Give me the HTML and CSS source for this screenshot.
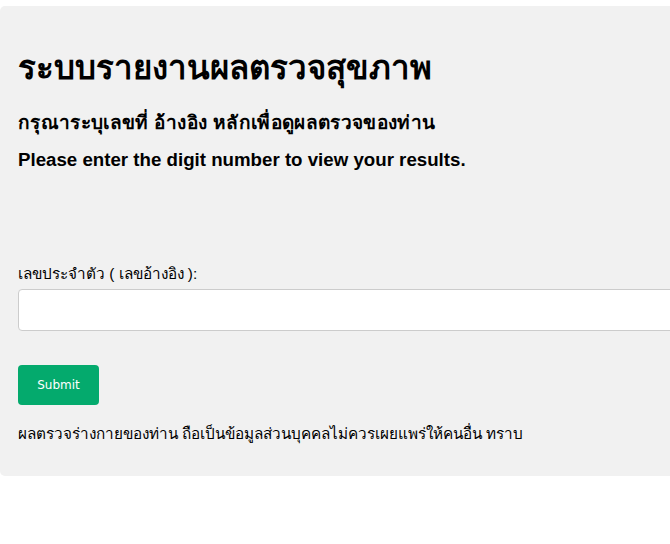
FILE: index.html
```html
<!DOCTYPE html>
<html lang="th">
<head>
<meta charset="utf-8">
<title>ระบบรายงานผลตรวจสุขภาพ</title>
<link rel="stylesheet" href="styles.css">
</head>
<body>
<div class="container">
  <h1 class="title">ระบบรายงานผลตรวจสุขภาพ</h1>
  <h3 class="sub-th">กรุณาระบุเลขที่ อ้างอิง หลักเพื่อดูผลตรวจของท่าน</h3>
  <h3 class="sub-en">Please enter the digit number to view your results.</h3>
  <form class="form">
    <label class="label" for="ref">เลขประจำตัว ( เลขอ้างอิง ):</label>
    <input class="input" id="ref" type="text">
    <button class="submit" type="button">Submit</button>
  </form>
  <p class="note">ผลตรวจร่างกายของท่าน ถือเป็นข้อมูลส่วนบุคคลไม่ควรเผยแพร่ให้คนอื่น ทราบ</p>
</div>
</body>
</html>
```
FILE: styles.css
```css
html, body {
  margin: 0;
  padding: 0;
  background: #ffffff;
  overflow: hidden;
}
body {
  font-family: "Liberation Sans", Arial, sans-serif;
  color: #000;
}
.container {
  margin-top: 6px;
  width: 720px;
  height: 470px;
  box-sizing: border-box;
  background: #f1f1f1;
  border-radius: 5px;
  padding: 42px 18px 0 18px;
}
.title {
  margin: 0;
  font-size: 33px;
  font-weight: bold;
  line-height: 40px;
}
.sub-th {
  margin: 23px 0 0;
  font-size: 19px;
  font-weight: bold;
  line-height: 24px;
  letter-spacing: 0.35px;
}
.sub-en {
  margin: 13px 0 0;
  font-size: 18.7px;
  font-weight: bold;
  line-height: 24px;
}
.form {
  display: flex;
  flex-direction: column;
  align-items: flex-start;
  margin-top: 92px;
}
.label {
  font-size: 15.3px;
  line-height: 20px;
}
.input {
  margin-top: 5px;
  width: 100%;
  height: 42px;
  box-sizing: border-box;
  border: 1px solid #cccccc;
  border-radius: 4px;
  background: #fff;
  padding: 12px;
}
.submit {
  margin-top: 34px;
  width: 81px;
  height: 40px;
  border: none;
  border-radius: 4px;
  background: #04aa6d;
  color: #fff;
  font-family: "DejaVu Sans", Verdana, sans-serif;
  font-size: 12px;
}
.note {
  margin: 19px 0 0;
  font-size: 15.3px;
  line-height: 20px;
}
```
